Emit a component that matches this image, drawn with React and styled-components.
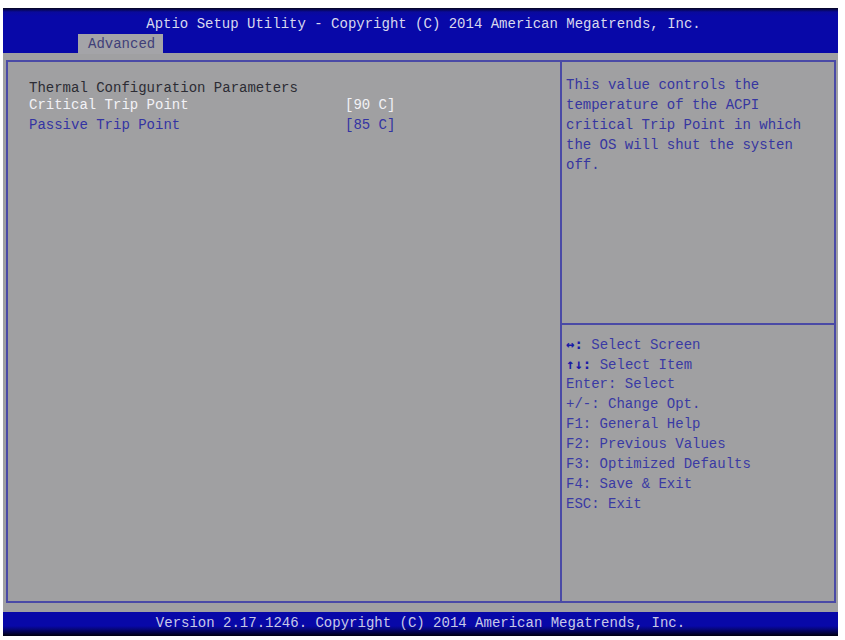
import React from 'react';
import styled, { createGlobalStyle } from 'styled-components';

const Global = createGlobalStyle`
  body {
    margin: 0;
    background: #ffffff;
    font-family: "Liberation Mono", "DejaVu Sans Mono", monospace;
  }
`;

const Screen = styled.div`
  margin: 8px 0 0 3px;
  width: 835px;
  height: 628px;
  display: flex;
  flex-direction: column;
  background: #a0a0a2;
  font-size: 14px;
  line-height: 20px;
`;

const Header = styled.div`
  height: 45px;
  background: linear-gradient(#050520 0px, #0a0a9c 4px, #0808a8 8px);
  display: flex;
  flex-direction: column;
  justify-content: space-between;
`;

const Title = styled.div`
  text-align: center;
  color: #d8d8ee;
  padding: 6px 0 0 6px;
`;

const Tabs = styled.div`
  display: flex;
  padding-left: 75px;
`;

const Tab = styled.div`
  width: 85px;
  height: 20px;
  box-sizing: border-box;
  padding-left: 10px;
  background: #a4a4a8;
  color: #404078;
  line-height: 20px;
`;

const Body = styled.div`
  flex: 1;
  padding: 7px 2px 9px 3px;
  display: flex;
`;

const Frame = styled.div`
  flex: 1;
  display: flex;
  border: 2px solid #4a4aa6;
`;

const LeftPane = styled.div`
  width: 554px;
  box-sizing: border-box;
  padding: 16px 0 0 21px;
  border-right: 2px solid #4a4aa6;
`;

const Row = styled.div`
  display: flex;
  margin-top: ${({ tone }) => (tone === 'active' ? '-3px' : '0')};
  color: ${({ tone }) =>
    tone === 'active' ? '#f2f2f6' : tone === 'link' ? '#3434a2' : '#2c2c34'};
`;

const Label = styled.span`
  width: 316px;
`;

const RightPane = styled.div`
  flex: 1;
  display: flex;
  flex-direction: column;
`;

const HelpBox = styled.div`
  height: 263px;
  box-sizing: border-box;
  padding: 13px 0 0 4px;
  border-bottom: 2px solid #4a4aa6;
  color: #3636a0;
`;

const Keys = styled.div`
  padding: 9px 0 0 4px;
  color: #3a3aa4;
`;

const KeyLine = styled.div`
  height: 20px;
  line-height: 20px;
  overflow: hidden;
`;

const Key = styled.span`
  color: ${({ strong }) => (strong ? '#1a1aa6' : 'inherit')};
  font-weight: ${({ strong }) => (strong ? 'bold' : 'normal')};
  font-family: ${({ strong }) => (strong ? '"DejaVu Sans Mono", monospace' : 'inherit')};
  line-height: 20px;
`;

const Footer = styled.div`
  height: 24px;
  background: linear-gradient(#0808a8 0px, #0808a8 14px, #040450 20px, #000010 24px);
  color: #c8c8e4;
  text-align: center;
  line-height: 22px;
`;

const help = [
  'This value controls the',
  'temperature of the ACPI',
  'critical Trip Point in which',
  'the OS will shut the systen',
  'off.',
];

const keys = [
  ['\u2194:', ' Select Screen', true],
  ['\u2191\u2193:', ' Select Item', true],
  ['Enter:', ' Select'],
  ['+/-:', ' Change Opt.'],
  ['F1:', ' General Help'],
  ['F2:', ' Previous Values'],
  ['F3:', ' Optimized Defaults'],
  ['F4:', ' Save & Exit'],
  ['ESC:', ' Exit'],
];

const App = () => {
  return (
    <>
      <Global />
      <Screen>
        <Header>
          <Title>Aptio Setup Utility - Copyright (C) 2014 American Megatrends, Inc.</Title>
          <Tabs>
            <Tab>Advanced</Tab>
          </Tabs>
        </Header>

        <Body>
          <Frame>
            <LeftPane>
              <Row>Thermal Configuration Parameters</Row>
              <Row tone="active">
                <Label>Critical Trip Point</Label>
                <span>[90 C]</span>
              </Row>
              <Row tone="link">
                <Label>Passive Trip Point</Label>
                <span>[85 C]</span>
              </Row>
            </LeftPane>

            <RightPane>
              <HelpBox>
                {help.map((line) => (
                  <div key={line}>{line}</div>
                ))}
              </HelpBox>
              <Keys>
                {keys.map(([k, text, strong]) => (
                  <KeyLine key={k}>
                    <Key strong={strong}>{k}</Key>
                    {text}
                  </KeyLine>
                ))}
              </Keys>
            </RightPane>
          </Frame>
        </Body>

        <Footer>Version 2.17.1246. Copyright (C) 2014 American Megatrends, Inc.</Footer>
      </Screen>
    </>
  );
};

export default App;
